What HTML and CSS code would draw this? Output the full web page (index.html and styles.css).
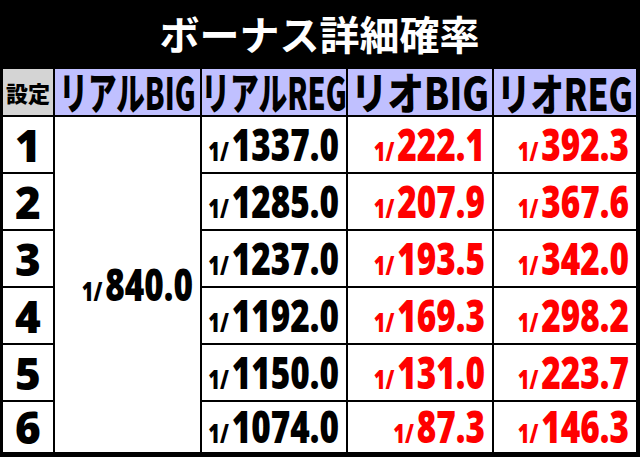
FILE: index.html
```html
<!DOCTYPE html>
<html lang="ja">
<head>
<meta charset="utf-8">
<link rel="stylesheet" href="styles.css">
</head>
<body>
<div class="frame">
  <h1 class="title">ボーナス詳細確率</h1>
  <div class="grid">
    <div class="h set"><span class="hx">設定</span></div>
    <div class="h"><span class="hx fit-a">リアルBIG</span></div>
    <div class="h"><span class="hx fit-b">リアルREG</span></div>
    <div class="h"><span class="hx fit-c">リオBIG</span></div>
    <div class="h"><span class="hx fit-d">リオREG</span></div>

    <div class="c s">1</div>
    <div class="c v tall"><span class="n"><small>1/</small>840.0</span></div>
    <div class="c v"><span class="n"><small>1/</small>1337.0</span></div>
    <div class="c v red"><span class="n"><small>1/</small>222.1</span></div>
    <div class="c v red"><span class="n"><small>1/</small>392.3</span></div>

    <div class="c s">2</div>
    <div class="c v"><span class="n"><small>1/</small>1285.0</span></div>
    <div class="c v red"><span class="n"><small>1/</small>207.9</span></div>
    <div class="c v red"><span class="n"><small>1/</small>367.6</span></div>

    <div class="c s">3</div>
    <div class="c v"><span class="n"><small>1/</small>1237.0</span></div>
    <div class="c v red"><span class="n"><small>1/</small>193.5</span></div>
    <div class="c v red"><span class="n"><small>1/</small>342.0</span></div>

    <div class="c s">4</div>
    <div class="c v"><span class="n"><small>1/</small>1192.0</span></div>
    <div class="c v red"><span class="n"><small>1/</small>169.3</span></div>
    <div class="c v red"><span class="n"><small>1/</small>298.2</span></div>

    <div class="c s">5</div>
    <div class="c v"><span class="n"><small>1/</small>1150.0</span></div>
    <div class="c v red"><span class="n"><small>1/</small>131.0</span></div>
    <div class="c v red"><span class="n"><small>1/</small>223.7</span></div>

    <div class="c s">6</div>
    <div class="c v"><span class="n"><small>1/</small>1074.0</span></div>
    <div class="c v red"><span class="n"><small>1/</small>87.3</span></div>
    <div class="c v red"><span class="n"><small>1/</small>146.3</span></div>
  </div>
</div>
</body>
</html>
```

FILE: styles.css
```css
html, body {
  margin: 0;
  padding: 0;
  background: #000;
}
.frame {
  width: 640px;
  height: 457px;
  box-sizing: border-box;
  background: #000;
  padding: 0 4px 5px 3px;
  display: flex;
  flex-direction: column;
  overflow: hidden;
}
.title {
  margin: 0;
  height: 69px;
  flex: none;
  color: #fff;
  font-family: "Noto Sans CJK JP", sans-serif;
  font-weight: 700;
  font-size: 40px;
  line-height: 66px;
  text-align: center;
}
.grid {
  display: grid;
  grid-template-columns: 50px 145px 144px 144px 142px;
  grid-template-rows: 46px 55px 55px 55px 55px 55px 50px;
  gap: 2px;
  background: #000;
}
.h {
  background: #c0c0ff;
  display: flex;
  align-items: center;
  justify-content: center;
  font-family: "Noto Sans CJK JP", sans-serif;
  font-weight: 900;
  line-height: 1;
  color: #000;
  white-space: nowrap;
}
.h .hx {
  display: inline-block;
  transform-origin: center center;
}
.fit-a { font-size: 28.6px; transform: scaleY(1.54); }
.fit-b { font-size: 28.8px; transform: scaleY(1.53); }
.fit-c { font-size: 36.5px; transform: scaleY(1.2); }
.fit-d { font-size: 33.4px; transform: scaleY(1.32); }
.h.set {
  background: #d4d4d4;
  font-size: 22px;
}
.c {
  background: #fff;
  display: flex;
  align-items: center;
}
.s {
  justify-content: center;
  font-family: "Open Sans", sans-serif;
  font-weight: 800;
  font-size: 44px;
  line-height: 1;
  color: #000;
}
.v {
  justify-content: flex-end;
  padding-right: 7px;
  font-family: "Open Sans", sans-serif;
  font-weight: 800;
  color: #000;
}
.v.red {
  color: #ff0000;
}
.tall {
  grid-column: 2;
  grid-row: 2 / span 6;
}
.n {
  display: inline-block;
  white-space: nowrap;
  font-size: 33.3px;
  line-height: 1;
  transform: scaleY(1.35);
  transform-origin: center center;
}
.n small {
  font-size: 20px;
  margin-right: 3px;
}
```
